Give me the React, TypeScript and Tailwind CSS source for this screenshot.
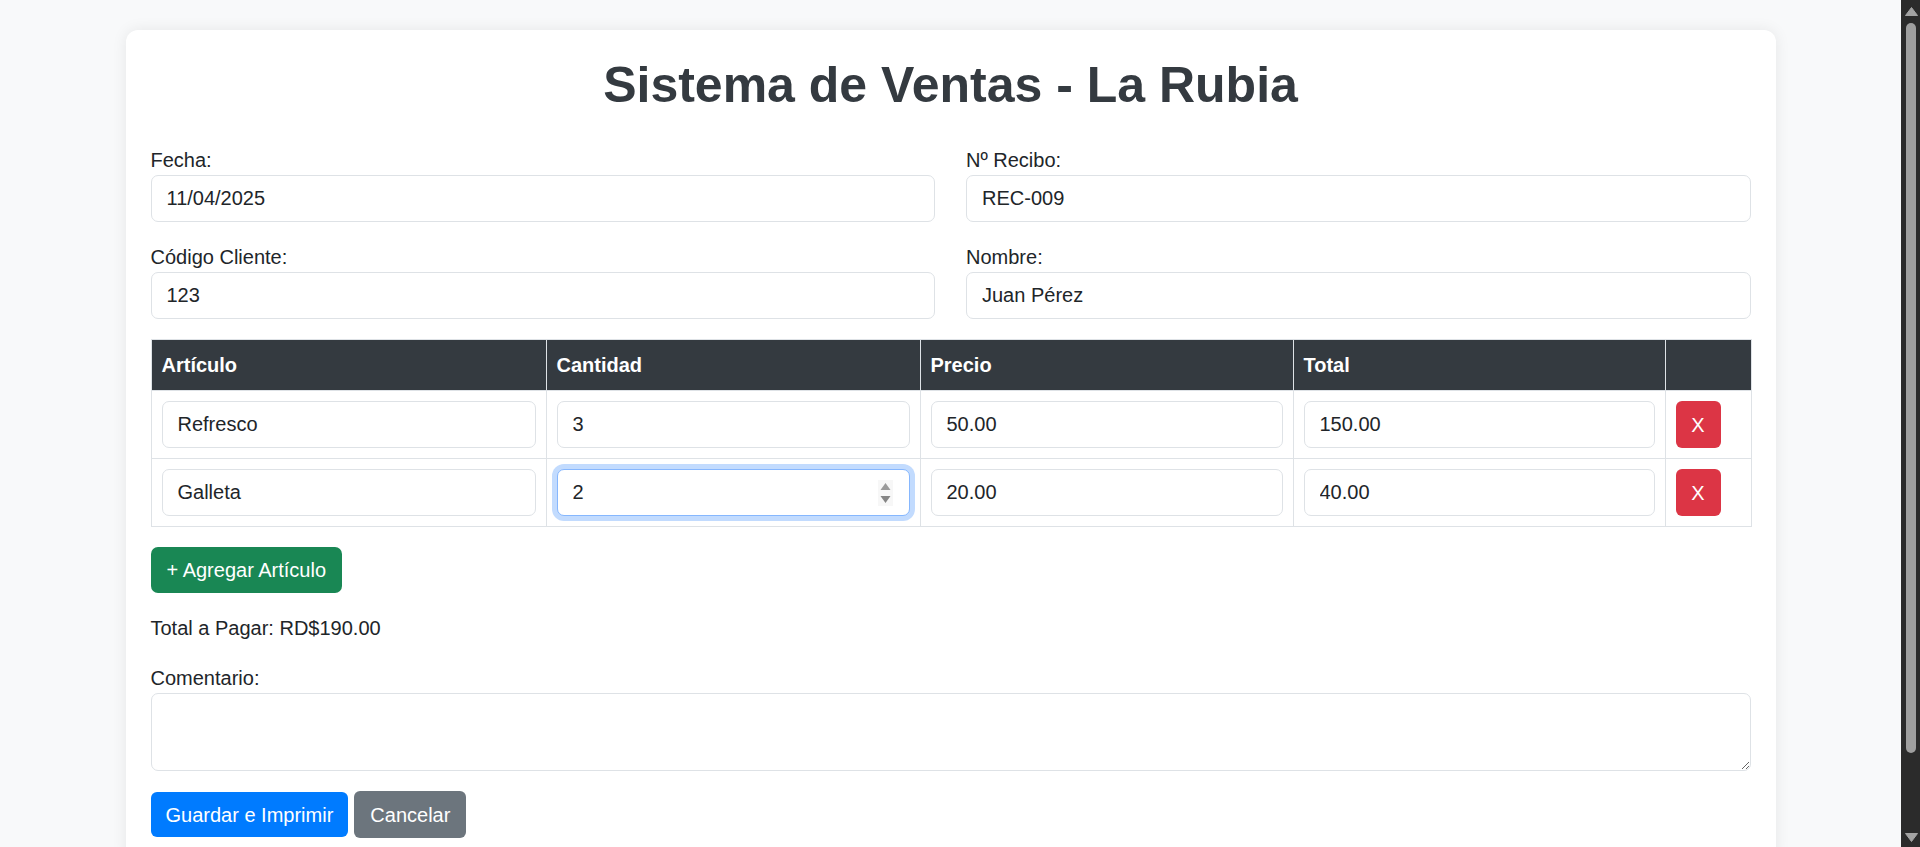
import React from 'react';

type Item = { articulo: string; cantidad: string; precio: string; total: string };

const items: Item[] = [
  { articulo: 'Refresco', cantidad: '3', precio: '50.00', total: '150.00' },
  { articulo: 'Galleta', cantidad: '2', precio: '20.00', total: '40.00' },
];

const inputCls =
  'block w-full h-[47px] rounded-[7px] border border-[#dee2e6] bg-white px-[15px] text-[20px] text-[#212529] outline-none';

const Field: React.FC<{ label: string; value: string }> = ({ label, value }) => (
  <div className="mb-[20px]">
    <label className="block text-[20px] leading-[30px] text-[#212529]">{label}</label>
    <input className={inputCls} defaultValue={value} readOnly />
  </div>
);

// fake window scrollbar, as seen on the right edge of the screenshot
const Scrollbar: React.FC = () => (
  <aside className="flex w-[19px] shrink-0 flex-col items-center bg-[#2b2b2b]">
    <svg className="mt-[7px] ml-[1px]" width="13" height="9" viewBox="0 0 13 9">
      <path d="M6.5 0.5 L12.5 8.5 L0.5 8.5 Z" fill="#a3a3a3" strokeLinejoin="round" stroke="#a3a3a3" />
    </svg>
    <div className="mt-[7px] ml-[1px] h-[730px] w-[10px] rounded-full bg-[#9f9f9f]" />
    <div className="flex-1" />
    <svg className="mb-[5px] ml-[1px]" width="13" height="9" viewBox="0 0 13 9">
      <path d="M0.5 0.5 L12.5 0.5 L6.5 8.5 Z" fill="#a3a3a3" strokeLinejoin="round" stroke="#a3a3a3" />
    </svg>
  </aside>
);

export default function App() {
  return (
    <div className="flex h-[847px] overflow-hidden bg-[#f8f9fa] font-['Liberation_Sans',Arial,sans-serif] text-[#212529]">
      <main className="min-w-0 flex-1">
        <div className="mx-auto mt-[30px] w-[1650px] rounded-[12px] bg-white p-[25px] shadow-[0_0_15px_rgba(0,0,0,0.08)]">
          <h1 className="mb-[30px] text-center text-[50px] font-bold leading-[60px] text-[#343a40]">
            Sistema de Ventas - La Rubia
          </h1>

          {/* Datos de la factura */}
          <div className="grid grid-cols-2 gap-x-[31px]">
            <Field label="Fecha:" value="11/04/2025" />
            <Field label="Nº Recibo:" value="REC-009" />
            <Field label="Código Cliente:" value="123" />
            <Field label="Nombre:" value="Juan Pérez" />
          </div>

          {/* Detalle de artículos */}
          <table className="mb-[20px] w-full table-fixed border-collapse">
            <colgroup>
              <col className="w-[395px]" />
              <col className="w-[374px]" />
              <col className="w-[373px]" />
              <col className="w-[372px]" />
              <col className="w-[86px]" />
            </colgroup>
            <thead className="bg-[#343a40]">
              <tr>
                {['Artículo', 'Cantidad', 'Precio', 'Total', ''].map((h, i) => (
                  <th
                    key={i}
                    className="border border-[#dee2e6] p-[10px] text-left text-[20px] font-bold leading-[30px] text-white"
                  >
                    {h}
                  </th>
                ))}
              </tr>
            </thead>
            <tbody>
              {items.map((it, idx) => (
                <tr key={idx}>
                  <td className="border border-[#dee2e6] p-[10px]">
                    <input className={inputCls} defaultValue={it.articulo} readOnly />
                  </td>
                  <td className="border border-[#dee2e6] p-[10px]">
                    {idx === 1 ? (
                      <div className="relative">
                        <input
                          className="block h-[47px] w-full rounded-[7px] border border-[#86b7fe] bg-white px-[15px] text-[20px] text-[#212529] shadow-[0_0_0_5px_rgba(13,110,253,0.25)] outline-none"
                          defaultValue={it.cantidad}
                          readOnly
                        />
                        <svg
                          className="absolute right-[17px] top-1/2 -translate-y-1/2"
                          width="15"
                          height="26"
                          viewBox="0 0 15 26"
                        >
                          <rect x="0" y="0" width="15" height="26" fill="#f7f7f7" />
                          <path d="M7.5 3 L12.5 10 L2.5 10 Z" fill="#9a9a9a" />
                          <path d="M2.5 16 L12.5 16 L7.5 23 Z" fill="#858585" />
                        </svg>
                      </div>
                    ) : (
                      <input className={inputCls} defaultValue={it.cantidad} readOnly />
                    )}
                  </td>
                  <td className="border border-[#dee2e6] p-[10px]">
                    <input className={inputCls} defaultValue={it.precio} readOnly />
                  </td>
                  <td className="border border-[#dee2e6] p-[10px]">
                    <input className={inputCls} defaultValue={it.total} readOnly />
                  </td>
                  <td className="border border-[#dee2e6] p-[10px]">
                    <button className="flex h-[47px] w-[45px] items-center justify-center rounded-[6px] bg-[#dc3545] text-[20px] text-white">
                      X
                    </button>
                  </td>
                </tr>
              ))}
            </tbody>
          </table>

          <button className="mb-[20px] h-[46px] rounded-[7px] bg-[#198754] px-[16px] text-[20px] text-white">
            + Agregar Artículo
          </button>

          <p className="mb-[20px] text-[20px] leading-[30px] text-[#212529]">Total a Pagar: RD$190.00</p>

          <div className="mb-[20px]">
            <label className="block text-[20px] leading-[30px] text-[#212529]">Comentario:</label>
            <textarea className="block h-[78px] w-full rounded-[7px] border border-[#dee2e6] px-[15px] py-[7px] text-[20px] text-[#212529] outline-none" />
          </div>

          <div className="flex items-center gap-[6px]">
            <button className="h-[45px] rounded-[6px] bg-[#007bff] px-[15px] text-[20px] text-white">
              Guardar e Imprimir
            </button>
            <button className="h-[47px] rounded-[6px] bg-[#6c757d] px-[16px] text-[20px] text-white">
              Cancelar
            </button>
          </div>
        </div>
      </main>
      <Scrollbar />
    </div>
  );
}
